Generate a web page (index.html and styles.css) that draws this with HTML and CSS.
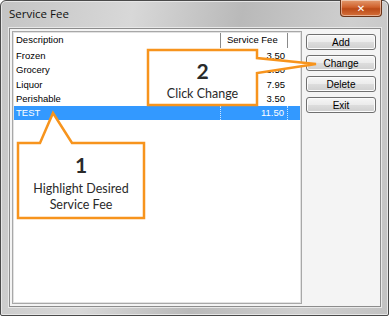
FILE: index.html
```html
<!DOCTYPE html>
<html lang="en">
<head>
    <meta charset="UTF-8">
    <title>Service Fee</title>
    <link rel="stylesheet" href="styles.css">
</head>
<body>

<div class="window">
    <div class="titlebar">
        <span class="title">Service Fee</span>
        <button class="closeBtn">&#x2715;</button>
    </div>
    <div class="client">
        <div class="list">
            <div class="row header">
                <span class="colDesc">Description</span>
                <span class="colFee">Service Fee</span>
                <span class="colRest"></span>
            </div>
            <div class="row"><span class="colDesc">Frozen</span><span class="colFee">3.50</span><span class="colRest"></span></div>
            <div class="row"><span class="colDesc">Grocery</span><span class="colFee">3.50</span><span class="colRest"></span></div>
            <div class="row"><span class="colDesc">Liquor</span><span class="colFee">7.95</span><span class="colRest"></span></div>
            <div class="row"><span class="colDesc">Perishable</span><span class="colFee">3.50</span><span class="colRest"></span></div>
            <div class="row selected"><span class="colDesc">TEST</span><span class="colFee">11.50</span><span class="colRest"></span></div>
        </div>
        <div class="buttons">
            <button class="btn">Add</button>
            <button class="btn">Change</button>
            <button class="btn">Delete</button>
            <button class="btn">Exit</button>
        </div>
    </div>

    <!-- callouts -->
    <div class="callout callout2">
        <svg class="calloutShape" width="1" height="1">
            <path d="M0,0 H109 V8 L168,14 L109,23 V55 H0 Z"/>
        </svg>
        <span class="num">2</span>
        <span class="txt">Click Change</span>
    </div>
    <div class="callout callout1">
        <svg class="calloutShape" width="1" height="1">
            <path d="M0,0 H22 L35,-30 L54,0 H126 V75 H0 Z"/>
        </svg>
        <span class="num">1</span>
        <span class="txt">Highlight Desired<br>Service Fee</span>
    </div>
</div>

</body>
</html>
```

FILE: styles.css
```css
*{margin: 0; padding: 0; box-sizing: border-box;}

body{
    width: 389px;
    height: 316px;
    background: #fff;
    font-family: "Liberation Sans", Arial, sans-serif;
}
.window{
    position: relative;
    width: 389px;
    height: 316px;
    display: flex;
    flex-direction: column;
    border: 1px solid #4a4a4a;
    border-radius: 6px 6px 2px 2px;
    background: linear-gradient(100deg, #c4c4c4 0%, #d8d8d8 30%, #b9b9b9 55%, #cfcfcf 80%, #c2c2c2 100%);
    box-shadow: inset 0 0 0 1px #e6e6e6;
    padding: 0 7px 8px 8px;
}
.titlebar{
    height: 27px;
    display: flex;
    align-items: flex-start;
    justify-content: space-between;
}
.title{
    margin-top: 5px;
    font-family: "Open Sans", sans-serif;
    font-size: 11.5px;
    color: #111;
}
.closeBtn{
    width: 42px;
    height: 17px;
    margin-top: -1px;
    margin-right: -1px;
    border: 1px solid #6b3418;
    border-top: none;
    border-radius: 0 0 4px 4px;
    background: linear-gradient(#e39a6e, #d0612c 45%, #bb4a17 55%, #d5703a);
    color: #fff;
    font-family: "DejaVu Sans", sans-serif;
    font-weight: bold;
    font-size: 10px;
    line-height: 15px;
    box-shadow: inset 0 0 0 1px rgba(255,255,255,0.45);
}
.client{
    flex: 1;
    display: flex;
    gap: 4px;
    padding: 2px 4px 2px 2px;
    background: #f4f4f4;
    border: 1px solid #8c8c8c;
    box-shadow: 0 0 0 1px #e8e8e8;
}
.list{
    flex: 1;
    background: #fff;
    border: 1px solid #a8a8a8;
    box-shadow: inset 0 0 0 1px #e2e2e2;
    padding: 1px;
    font-size: 9.5px;
    color: #000;
}
.row{
    display: flex;
    height: 14.3px;
    line-height: 14px;
}
.row.header{
    height: 15px;
    margin-bottom: 1px;
}
.colDesc{
    width: 206px;
    padding-left: 2px;
}
.colFee{
    width: 68px;
    text-align: right;
    padding-right: 3px;
}
.header .colFee{
    text-align: left;
    padding-left: 6px;
    border-left: 1px solid #8a8a8a;
    border-right: 1px solid #8a8a8a;
}
.colRest{
    flex: 1;
}
.row.selected{
    background: #3399ff;
    color: #fff;
}
.row.selected .colFee{
    border-left: 1px dotted #cfe6ff;
    border-right: 1px dotted #cfe6ff;
}
.buttons{
    width: 70px;
    display: flex;
    flex-direction: column;
    gap: 5px;
    padding-top: 3px;
}
.btn{
    height: 16px;
    border: 1px solid #707070;
    border-radius: 3px;
    background: linear-gradient(#f6f6f6, #ebebeb 50%, #dddddd 51%, #cfcfcf);
    font-family: "Liberation Sans", Arial, sans-serif;
    font-size: 10px;
    color: #000;
    box-shadow: inset 0 0 0 1px #fcfcfc;
}

/* callouts */
.callout{
    position: absolute;
    display: flex;
    flex-direction: column;
    align-items: center;
    font-family: Lato, "Open Sans", sans-serif;
    color: #2a2a2a;
    text-align: center;
}
.calloutShape{
    position: absolute;
    left: 0;
    top: 0;
    overflow: visible;
}
.calloutShape path{
    fill: #fff;
    stroke: #f7941d;
    stroke-width: 2.5;
}
.num, .txt{
    position: relative;
}
.num{
    font-size: 21px;
    font-weight: bold;
    line-height: 24px;
}
.txt{
    font-size: 12.5px;
    line-height: 16px;
}
.callout2{
    left: 147px;
    top: 49px;
    width: 109px;
    height: 55px;
    padding-top: 9px;
    gap: 3px;
}
.callout1{
    left: 17px;
    top: 142px;
    width: 126px;
    height: 75px;
    padding-top: 10px;
    gap: 4px;
}
```
